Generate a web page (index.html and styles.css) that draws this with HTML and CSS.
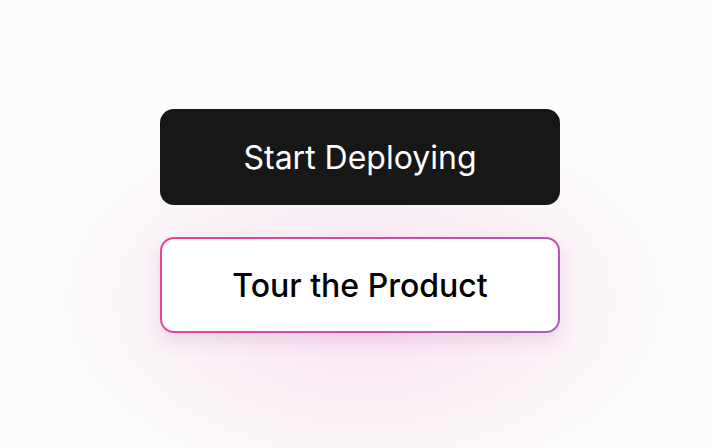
FILE: index.html
```html
<!DOCTYPE html>
<html lang="en">
<head>
  <meta charset="UTF-8">
  <meta name="viewport" content="width=device-width, initial-scale=1.0">
  <title>Get Started</title>
  <link rel="stylesheet" href="styles.css">
</head>
<body>
  <div class="stage">
    <div class="actions">
      <button type="button" class="btn btn-primary">Start Deploying</button>
      <button type="button" class="btn btn-outline">
        <span class="btn-inner">Tour the Product</span>
      </button>
    </div>
  </div>
</body>
</html>
```

FILE: styles.css
```css
body {
  margin: 0;
  background-color: #fcfcfc;
  font-family: Inter, "Noto Sans", sans-serif;
}
.stage {
  width: 712px;
  height: 448px;
  display: flex;
  justify-content: center;
  padding: 109px 0 0 8px;
  box-sizing: border-box;
  background:
    radial-gradient(ellipse 340px 210px at 364px 300px, rgba(238, 110, 185, 0.18), rgba(238, 110, 185, 0.07) 55%, rgba(252, 252, 252, 0) 100%);
}
.actions {
  display: flex;
  flex-direction: column;
  gap: 32px;
  width: 400px;
}
.btn {
  height: 96px;
  width: 100%;
  font-family: inherit;
  font-size: 32px;
  font-weight: 500;
  border: none;
  cursor: pointer;
  padding: 0;
}
.btn-primary {
  background-color: #171717;
  color: #fff;
  font-weight: 400;
  border-radius: 14px;
}
.btn-outline {
  background: linear-gradient(135deg, #f2408a, #a858c6);
  border-radius: 14px;
  padding: 2px;
  box-shadow: 0 8px 18px rgba(160, 60, 140, 0.16);
}
.btn-inner {
  display: flex;
  align-items: center;
  justify-content: center;
  height: 100%;
  background-color: #fff;
  border-radius: 12px;
  color: #000;
}
```
